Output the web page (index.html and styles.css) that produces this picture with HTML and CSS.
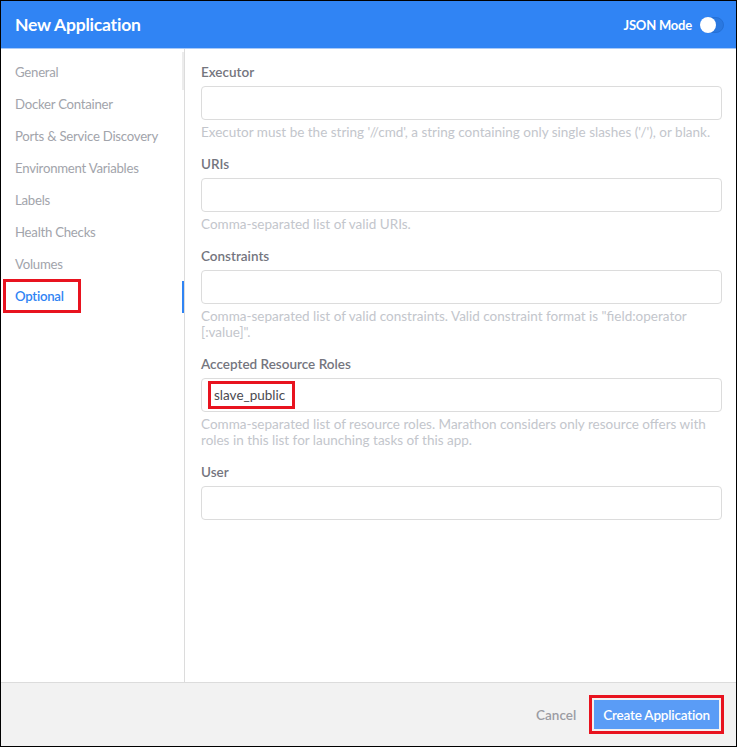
FILE: index.html
```html
<!DOCTYPE html>
<html>
<head>
<meta charset="utf-8">
<link rel="stylesheet" href="styles.css">
</head>
<body>
<div class="modal">
  <header class="header">
    <h1 class="title">New Application</h1>
    <div class="json-mode">
      <span>JSON Mode</span>
      <span class="toggle"><span class="knob"></span></span>
    </div>
  </header>
  <div class="body">
    <nav class="sidebar">
      <span class="scroll-thumb"></span>
      <a class="nav-item">General</a>
      <a class="nav-item">Docker Container</a>
      <a class="nav-item">Ports &amp; Service Discovery</a>
      <a class="nav-item">Environment Variables</a>
      <a class="nav-item">Labels</a>
      <a class="nav-item">Health Checks</a>
      <a class="nav-item">Volumes</a>
      <a class="nav-item active"><span class="highlight">Optional</span></a>
    </nav>
    <main class="content">
      <div class="field">
        <label class="label">Executor</label>
        <div class="input"></div>
        <p class="help">Executor must be the string '//cmd', a string containing only single slashes ('/'), or blank.</p>
      </div>
      <div class="field">
        <label class="label">URIs</label>
        <div class="input"></div>
        <p class="help">Comma-separated list of valid URIs.</p>
      </div>
      <div class="field">
        <label class="label">Constraints</label>
        <div class="input"></div>
        <p class="help">Comma-separated list of valid constraints. Valid constraint format is "field:operator [:value]".</p>
      </div>
      <div class="field">
        <label class="label">Accepted Resource Roles</label>
        <div class="input"><span class="value">slave_public</span></div>
        <p class="help">Comma-separated list of resource roles. Marathon considers only resource offers with roles in this list for launching tasks of this app.</p>
      </div>
      <div class="field">
        <label class="label">User</label>
        <div class="input"></div>
      </div>
    </main>
  </div>
  <footer class="footer">
    <button class="btn-cancel">Cancel</button>
    <button class="btn-create">Create Application</button>
  </footer>
</div>
</body>
</html>
```
FILE: styles.css
```css
* { box-sizing: border-box; }
html, body { margin: 0; padding: 0; }
body {
  width: 737px;
  height: 747px;
  font-family: "Source Sans Pro", Lato, "Noto Sans", sans-serif;
  background: #fff;
}
.modal {
  width: 737px;
  height: 747px;
  border: 1px solid #000;
  display: flex;
  flex-direction: column;
}
.header {
  height: 48px;
  flex: none;
  background: #3084f4;
  border-bottom: 1px solid #a9caf8;
  display: flex;
  align-items: center;
  justify-content: space-between;
  padding: 0 12px 0 14px;
}
.title {
  margin: 0;
  color: #fff;
  font-size: 17.5px;
  font-weight: 700;
  letter-spacing: -0.2px;
}
.json-mode {
  display: flex;
  align-items: center;
  gap: 8px;
  color: #fff;
  font-size: 13px;
  font-weight: 700;
  letter-spacing: -0.2px;
}
.toggle {
  width: 24px;
  height: 16px;
  border-radius: 8px;
  background: #2a78e0;
  border: 1px solid #2570d6;
  position: relative;
}
.knob {
  position: absolute;
  left: -1px;
  top: -1px;
  width: 16px;
  height: 16px;
  border-radius: 50%;
  background: #fff;
}
.body {
  flex: 1;
  display: flex;
  min-height: 0;
}
.sidebar {
  width: 184px;
  flex: none;
  border-right: 1px solid #dcdcdc;
  position: relative;
  display: flex;
  flex-direction: column;
  padding-top: 11px;
}
.scroll-thumb {
  position: absolute;
  right: 0;
  top: 3px;
  width: 2px;
  height: 38px;
  background: #ececec;
}
.nav-item {
  display: block;
  height: 32px;
  line-height: 24px;
  padding: 0 14px;
  font-size: 13.2px;
  letter-spacing: -0.25px;
  white-space: nowrap;
  color: #a2a4ab;
  position: relative;
}
.nav-item.active {
  color: #3084f4;
  font-weight: 600;
}
.nav-item.active::after {
  content: "";
  position: absolute;
  right: 0;
  top: -3px;
  width: 2px;
  height: 32px;
  background: #3084f4;
}
.highlight {
  display: inline-block;
  margin-left: -12px;
  margin-top: -5px;
  padding: 2px 14px 2px 9px;
  border: 3px solid #e8131f;
  line-height: 24px;
}
.content {
  flex: 1;
  padding: 15px 14px 0 16px;
}
.field {
  margin-bottom: 16px;
}
.label {
  display: block;
  font-size: 13.5px;
  font-weight: 600;
  color: #74757e;
  line-height: 16px;
  margin-bottom: 6px;
}
.input {
  height: 34px;
  border: 1px solid #dcdcdc;
  border-radius: 4px;
  display: flex;
  align-items: center;
  padding-left: 6px;
}
.value {
  border: 3px solid #e8131f;
  padding: 2px 7px 2px 3px;
  font-size: 13.5px;
  color: #4a4a50;
  line-height: 18px;
}
.help {
  margin: 4px 0 0;
  font-size: 13.5px;
  line-height: 16px;
  color: #c3c6cc;
}
.footer {
  height: 64px;
  flex: none;
  background: #f2f2f2;
  border-top: 1px solid #dcdcdc;
  display: flex;
  align-items: center;
  justify-content: flex-end;
  gap: 18px;
  padding-right: 17px;
}
.btn-cancel {
  background: none;
  border: none;
  font-family: inherit;
  font-size: 13.5px;
  font-weight: 600;
  color: #9b9ca3;
  padding: 0;
}
.btn-create {
  background: #5a9cf6;
  border: none;
  color: #fff;
  font-family: inherit;
  font-size: 13.5px;
  font-weight: 600;
  letter-spacing: -0.2px;
  height: 29px;
  padding: 0 9px;
  outline: 3px solid #e8131f;
  outline-offset: 2px;
}
```
